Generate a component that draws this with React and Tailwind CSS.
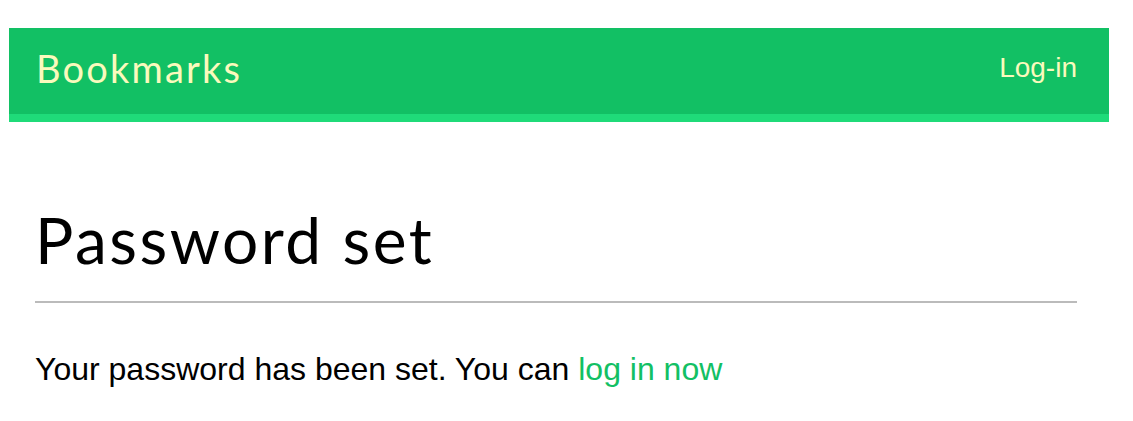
export default function App() {
  return (
    <div className="min-h-screen bg-white pl-[9px] pt-[28px] pr-[24px]">
      {/* Header */}
      <header className="flex h-[94px] items-start justify-between border-b-[8px] border-[#1fdb79] bg-[#12c064] pl-[27px] pr-[32px]">
        <div className="pt-[18px] text-[38px] leading-[44px] tracking-[2.2px] text-[#fafabd] font-['Lato',sans-serif]">
          Bookmarks
        </div>
        <a href="#" className="pt-[23px] text-[28px] leading-[34px] text-[#fafabd] font-['Liberation_Sans',Arial,sans-serif]">
          Log-in
        </a>
      </header>

      <main className="pl-[26px] pr-[32px]">
        <h1 className="mt-[81px] pb-[24px] border-b-2 border-[#bbbbbb] text-[64px] leading-[74px] tracking-[2.5px] text-black font-['Lato',sans-serif]">
          Password set
        </h1>
        <p className="mt-[47px] text-[32px] leading-[38px] text-black font-['Liberation_Sans',Arial,sans-serif]">
          Your password has been set. You can{" "}
          <a href="#" className="text-[#12c064]">log in now</a>
        </p>
      </main>
    </div>
  );
}
